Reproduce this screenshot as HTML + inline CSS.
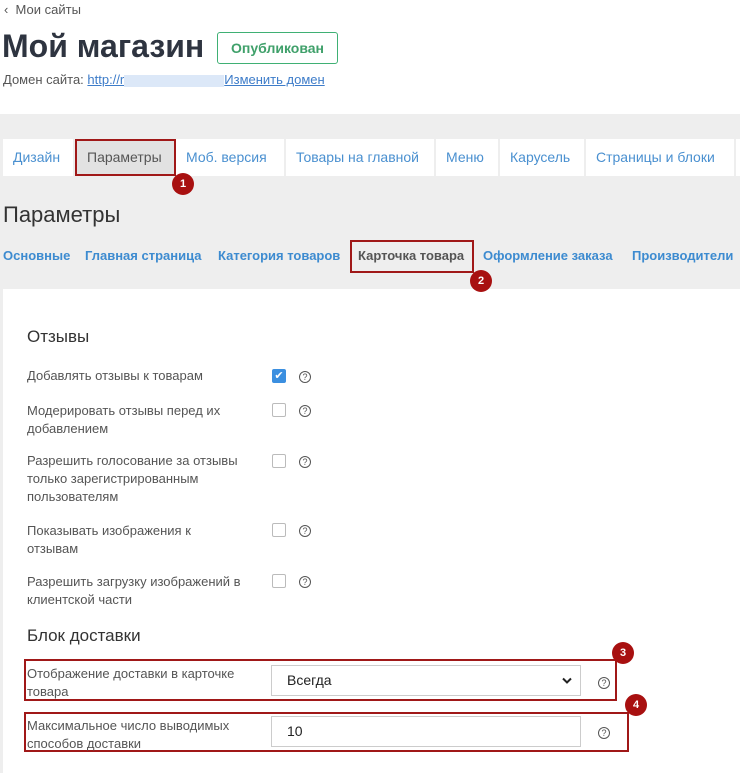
<!DOCTYPE html>
<html><head><meta charset="utf-8"><style>
*{margin:0;padding:0;box-sizing:border-box}
body{width:740px;height:773px;overflow:hidden;background:#fff;font-family:"Liberation Sans",sans-serif;position:relative;color:#333}
.a{position:absolute;white-space:nowrap}
.gray{position:absolute;left:0;top:114px;width:740px;height:175px;background:#eeeeee}
.strip{position:absolute;left:0;top:289px;width:3px;height:484px;background:#eeeeee}
.tabs{position:absolute;top:139px;left:3px;height:37px;display:flex}
.tab{background:#fff;color:#4a90d0;font-size:14px;line-height:37px;padding:0 10px;border-right:2px solid #eee;height:37px}
.tab.sel{background:#e2e2e2;color:#555;border:2px solid #a01818;line-height:33px}
.sub{position:absolute;top:248px;font-size:13px;color:#3d8bd0;font-weight:bold}
.badge{position:absolute;width:22px;height:22px;border-radius:50%;background:#a81010;color:#fff;font-size:11px;font-weight:bold;text-align:center;line-height:22px}
.lbl{position:absolute;left:27px;font-size:13px;color:#555;line-height:18px}
.cb{position:absolute;left:272px;width:14px;height:14px;border:1px solid #bbb;border-radius:2px;background:#fff}
.q{position:absolute;width:12px;height:12px;border:1px solid #555;border-radius:50%;font-size:9px;line-height:10px;text-align:center;color:#555}
.red{position:absolute;border:2px solid #a01818}
.inp{position:absolute;left:272px;width:308px;height:31px;border:1px solid #ccc;background:#fff;font-size:14px;line-height:29px;padding-left:15px;color:#222}
</style></head><body>
<div class="a" style="left:4px;top:2px;font-size:13px;color:#555">&#8249;&nbsp; Мои сайты</div>
<div class="a" style="left:2px;top:28px;font-size:32px;font-weight:bold;color:#2e3440">Мой магазин</div>
<div class="a" style="left:217px;top:32px;width:121px;height:32px;border:1px solid #3fb074;border-radius:3px;color:#3fa06a;font-size:14px;font-weight:bold;text-align:center;line-height:30px">Опубликован</div>
<div class="a" style="left:3px;top:72px;font-size:13px;color:#555">Домен сайта: <span style="color:#3d7cc9;text-decoration:underline">http://r</span><span style="display:inline-block;width:100px;height:12px;background:#dce8f8;vertical-align:middle"></span><span style="color:#3d7cc9;text-decoration:underline">Изменить домен</span></div>
<div class="gray"></div><div class="strip"></div>
<div class="tabs">
<div class="tab" style="width:72px">Дизайн</div>
<div class="tab sel" style="width:101px">Параметры</div>
<div class="tab" style="width:110px">Моб. версия</div>
<div class="tab" style="width:150px">Товары на главной</div>
<div class="tab" style="width:64px">Меню</div>
<div class="tab" style="width:86px">Карусель</div>
<div class="tab" style="width:150px">Страницы и блоки</div>
<div class="tab" style="width:10px"></div>
</div>
<div class="badge" style="left:172px;top:173px">1</div>
<div class="a" style="left:3px;top:202px;font-size:22px;color:#333">Параметры</div>
<div class="sub" style="left:3px">Основные</div>
<div class="sub" style="left:85px">Главная страница</div>
<div class="sub" style="left:218px">Категория товаров</div>
<div class="a" style="left:350px;top:240px;width:124px;height:33px;border:2px solid #a01818"></div>
<div class="sub" style="left:358px;color:#555">Карточка товара</div>
<div class="sub" style="left:483px">Оформление заказа</div>
<div class="sub" style="left:632px">Производители</div>
<div class="badge" style="left:470px;top:270px">2</div>
<div class="a" style="left:27px;top:327px;font-size:17px;color:#333">Отзывы</div>
<div class="lbl" style="top:367px">Добавлять отзывы к товарам</div>
<div class="cb" style="top:369px;background:#3b8fe0;border-color:#3b8fe0;color:#fff;font-size:11px;line-height:12px;text-align:center">✔</div>
<div class="q" style="left:299px;top:371px">?</div>
<div class="lbl" style="top:402px">Модерировать отзывы перед их<br>добавлением</div>
<div class="cb" style="top:403px"></div><div class="q" style="left:299px;top:405px">?</div>
<div class="lbl" style="top:452px">Разрешить голосование за отзывы<br>только зарегистрированным<br>пользователям</div>
<div class="cb" style="top:454px"></div><div class="q" style="left:299px;top:456px">?</div>
<div class="lbl" style="top:522px">Показывать изображения к<br>отзывам</div>
<div class="cb" style="top:523px"></div><div class="q" style="left:299px;top:525px">?</div>
<div class="lbl" style="top:573px">Разрешить загрузку изображений в<br>клиентской части</div>
<div class="cb" style="top:574px"></div><div class="q" style="left:299px;top:576px">?</div>
<div class="a" style="left:27px;top:626px;font-size:17px;color:#333">Блок доставки</div>
<div class="red" style="left:24px;top:659px;width:593px;height:42px"></div>
<div class="lbl" style="top:665px">Отображение доставки в карточке<br>товара</div>
<div class="inp" style="top:665px;left:271px;width:310px">Всегда<svg style="position:absolute;right:8px;top:11px" width="10" height="7" viewBox="0 0 10 7"><path d="M1 1.5L5 5.5L9 1.5" fill="none" stroke="#222" stroke-width="2"/></svg></div>
<div class="q" style="left:598px;top:677px">?</div>
<div class="badge" style="left:612px;top:642px">3</div>
<div class="red" style="left:24px;top:712px;width:605px;height:40px"></div>
<div class="lbl" style="top:717px">Максимальное число выводимых<br>способов доставки</div>
<div class="inp" style="top:716px;left:271px;width:310px">10</div>
<div class="q" style="left:598px;top:727px">?</div>
<div class="badge" style="left:625px;top:694px">4</div>
</body></html>
